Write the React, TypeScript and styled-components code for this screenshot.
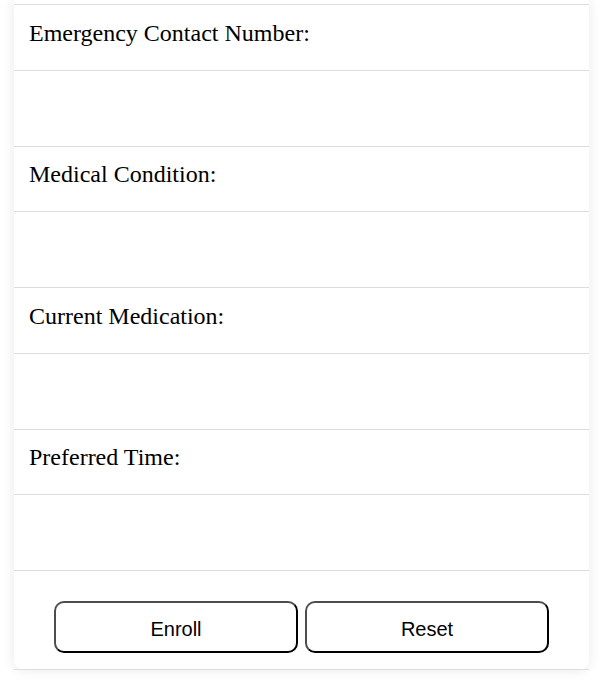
import React from 'react'
import styled, { createGlobalStyle } from 'styled-components'

const GlobalStyle = createGlobalStyle`
  body {
    margin: 0;
    background: #ffffff;
    font-family: "Liberation Serif", "Times New Roman", serif;
  }
`

const Page = styled.div`
  padding: 0 24px 12px 14px;
`
const Card = styled.div`
  background: #ffffff;
  border-radius: 0 0 10px 10px;
  box-shadow: 0 0 14px rgba(0, 0, 0, 0.09);
  padding-top: 4px;
`
const LabelRow = styled.div`
  border-top: 1px solid #dddddd;
  display: flex;
  align-items: center;
  padding: 0 15px 8px;
  box-sizing: border-box;
  height: 65.5px;
`
const Label = styled.label`
  font-size: 24px;
  color: #000000;
`
const InputRow = styled.div`
  height: 76px;
  border-top: 1px solid #dddddd;
  box-sizing: border-box;
  padding: 0 15px;
  display: flex;
  align-items: center;
`
const Field = styled.input`
  width: 100%;
  border: none;
  outline: none;
  background: transparent;
  font-size: 20px;
`
const ButtonRow = styled.div`
  border-top: 1px solid #dddddd;
  border-bottom: 1px solid #dddddd;
  display: flex;
  justify-content: center;
  gap: 7px;
  padding: 30px 0 16px;
`
const ActionButton = styled.button`
  width: 244px;
  height: 52px;
  padding: 4px 0 0;
  background: #ffffff;
  border: 2px solid;
  border-color: #4d4d4d #000000 #000000 #4d4d4d;
  border-radius: 10px;
  font-family: "Liberation Sans", Arial, sans-serif;
  font-size: 20px;
  color: #000000;
  cursor: pointer;
`

const fields = [
  { id: 'emergency', label: 'Emergency Contact Number:' },
  { id: 'condition', label: 'Medical Condition:' },
  { id: 'medication', label: 'Current Medication:' },
  { id: 'time', label: 'Preferred Time:' },
]

const App = () => (
  <>
    <GlobalStyle />
    <Page>
      <Card>
        {fields.map(f => (
          <React.Fragment key={f.id}>
            <LabelRow>
              <Label htmlFor={f.id}>{f.label}</Label>
            </LabelRow>
            <InputRow>
              <Field id={f.id} type="text" />
            </InputRow>
          </React.Fragment>
        ))}
        <ButtonRow>
          <ActionButton type="submit">Enroll</ActionButton>
          <ActionButton type="reset">Reset</ActionButton>
        </ButtonRow>
      </Card>
    </Page>
  </>
)

export default App
